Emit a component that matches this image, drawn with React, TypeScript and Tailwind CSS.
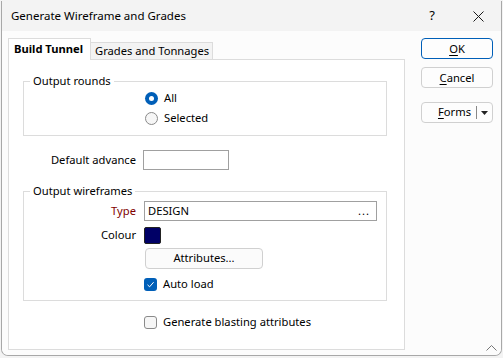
import React, { useState } from "react";

const font = { fontFamily: '"Segoe UI", "Noto Sans", "Liberation Sans", sans-serif' };

const Radio = ({ checked, label, onClick }: { checked: boolean; label: string; onClick: () => void }) => (
  <div className="flex items-center gap-[6px] h-[20px] cursor-default" onClick={onClick}>
    {checked ? (
      <span className="w-[13px] h-[13px] rounded-full bg-[#005fb8] flex items-center justify-center">
        <span className="w-[5px] h-[5px] rounded-full bg-white" />
      </span>
    ) : (
      <span className="w-[13px] h-[13px] rounded-full border border-[#8a8a8a] bg-[#f6f6f6]" />
    )}
    <span>{label}</span>
  </div>
);

const Check = ({ checked, label, onClick }: { checked: boolean; label: string; onClick: () => void }) => (
  <div className="flex items-center gap-[6px] cursor-default" onClick={onClick}>
    {checked ? (
      <span className="w-[13px] h-[13px] rounded-[3px] bg-[#005fb8] flex items-center justify-center">
        <svg width="9" height="9" viewBox="0 0 9 9">
          <path d="M1.5 4.8 L3.6 6.8 L7.6 2.2" fill="none" stroke="white" strokeWidth="1" />
        </svg>
      </span>
    ) : (
      <span className="w-[13px] h-[13px] rounded-[3px] border border-[#8a8a8a] bg-[#f6f6f6]" />
    )}
    <span>{label}</span>
  </div>
);

const Group = ({ title, className, children }: { title: string; className: string; children: React.ReactNode }) => (
  <fieldset className={`border border-[#dcdcdc] ${className}`}>
    <legend className="ml-[6px] px-[3px] leading-[14px]">{title}</legend>
    {children}
  </fieldset>
);

const DialogButton = ({ children, primary }: { children: React.ReactNode; primary?: boolean }) => (
  <button
    className={`w-[72px] h-[21px] rounded-[4px] border bg-[#fdfdfd] leading-[18px] flex items-center justify-center ${
      primary ? "border-[#005fb8]" : "border-[#d0d0d0]"
    }`}
  >
    {children}
  </button>
);

export default function App() {
  const [rounds, setRounds] = useState("all");
  const [autoLoad, setAutoLoad] = useState(true);
  const [blasting, setBlasting] = useState(false);

  return (
    <div className="w-[503px] h-[358px] bg-[#f3f3f3] text-[11.2px] text-black overflow-hidden" style={font}>
      <div className="ml-[1px] mt-[1px] w-[501px] h-[355px] flex flex-col border-x border-b border-[#a8a8a8] rounded-b-[7px] overflow-hidden">
        {/* title bar */}
        <div className="h-[30px] bg-[#f3f3f3] flex items-center pl-[9px] shrink-0">
          <span className="text-[11.5px] flex-1">Generate Wireframe and Grades</span>
          <span className="w-[46px] text-center text-[13px]">?</span>
          <span className="w-[46px] flex justify-center">
            <svg width="11" height="11" viewBox="0 0 11 11">
              <path d="M0.5 0.5 L10.5 10.5 M10.5 0.5 L0.5 10.5" stroke="#1a1a1a" strokeWidth="1" />
            </svg>
          </span>
        </div>

        {/* body */}
        <div className="flex-1 bg-[#fcfcfc] flex pl-[6px] pt-[7px] relative">
          <div className="w-[397px] flex flex-col">
            <div className="flex items-end h-[22px]">
              <div className="w-[83px] h-[22px] bg-white border border-b-0 border-[#dcdcdc] font-bold flex items-center pl-[5px] relative z-10 whitespace-nowrap">
                Build Tunnel
              </div>
              <div className="h-[18px] bg-[#f3f3f3] border border-l-0 border-[#dcdcdc] flex items-center pl-[4px] pr-[3px] whitespace-nowrap">
                Grades and Tonnages
              </div>
            </div>
            <div className="h-[291px] -mt-px bg-white border border-[#dcdcdc] pl-[14px] pr-[17px] pt-[14px] flex flex-col">
              <Group title="Output rounds" className="h-[62px]">
                <div className="pl-[121px]">
                  <Radio checked={rounds === "all"} label="All" onClick={() => setRounds("all")} />
                  <Radio checked={rounds === "selected"} label="Selected" onClick={() => setRounds("selected")} />
                </div>
              </Group>

              <div className="flex items-center mt-[14px] h-[20px]">
                <span className="w-[114px] text-right pr-[1px]">Default advance</span>
                <input className="ml-[6px] w-[86px] h-[20px] border border-[#a0a0a0] bg-white outline-none px-[3px]" />
              </div>

              <Group title="Output wireframes" className="mt-[14px] h-[117px] pb-[8px]">
                <div className="flex items-center mt-[3px] h-[20px]">
                  <span className="w-[113px] text-right pr-[1px] text-[#800000]">Type</span>
                  <div className="ml-[7px] w-[233px] h-[20px] border border-[#a0a0a0] bg-white flex items-center px-[3px]">
                    <span className="flex-1">DESIGN</span>
                    <span className="pr-[3px] tracking-[1px]">...</span>
                  </div>
                </div>
                <div className="flex items-center mt-[6px] h-[17px]">
                  <span className="w-[113px] text-right pr-[1px]">Colour</span>
                  <span className="ml-[7px] w-[17px] h-[17px] bg-[#000066] border border-[#222] rounded-[2px]" />
                </div>
                <div className="flex mt-[4px] pl-[121px]">
                  <button className="w-[118px] h-[21px] rounded-[4px] border border-[#d0d0d0] bg-[#fbfbfb]">
                    Attributes...
                  </button>
                </div>
                <div className="flex mt-[8px] pl-[120px] h-[15px] items-center">
                  <Check checked={autoLoad} label="Auto load" onClick={() => setAutoLoad(!autoLoad)} />
                </div>
              </Group>

              <div className="flex mt-[14px] pl-[121px] h-[15px] items-center">
                <Check checked={blasting} label="Generate blasting attributes" onClick={() => setBlasting(!blasting)} />
              </div>
            </div>
          </div>

          <div className="flex flex-col ml-[16px] gap-[8px]">
            <DialogButton primary>
              <span className="underline underline-offset-2">O</span>K
            </DialogButton>
            <DialogButton>
              <span className="underline underline-offset-2">C</span>ancel
            </DialogButton>
            <div className="mt-[6px] w-[72px] h-[21px] rounded-[4px] border border-[#d0d0d0] bg-[#fdfdfd] flex items-center">
              <span className="flex-1 text-right pr-[5px]">
                <span className="underline underline-offset-2">F</span>orms
              </span>
              <span className="w-px h-[13px] bg-[#888]" />
              <span className="w-[15px] flex justify-center">
                <svg width="7" height="4" viewBox="0 0 7 4">
                  <path d="M0 0 L7 0 L3.5 4 Z" fill="#222" />
                </svg>
              </span>
            </div>
          </div>

          <svg className="absolute right-[4px] bottom-[4px]" width="11" height="6" viewBox="0 0 11 6">
            <path d="M0.5 5.5 L5.5 0.5 L10.5 5.5" fill="none" stroke="#777" strokeWidth="1" />
          </svg>
        </div>
      </div>
    </div>
  );
}
